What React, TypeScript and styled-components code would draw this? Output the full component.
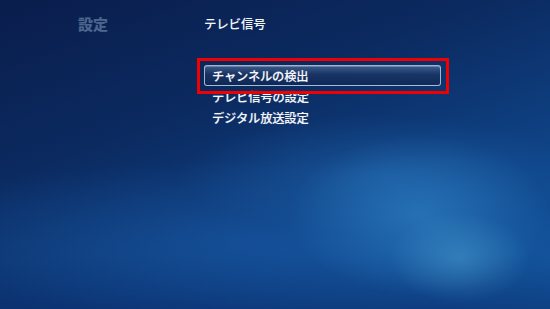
import React from "react";
import styled, { createGlobalStyle } from "styled-components";

const Global = createGlobalStyle`
  html, body { margin: 0; padding: 0; }
  body {
    width: 550px;
    height: 309px;
    overflow: hidden;
    font-family: "Noto Sans CJK JP", "Noto Sans", sans-serif;
  }
`;

const Screen = styled.div`
  width: 550px;
  height: 309px;
  box-sizing: border-box;
  padding: 14px 0 0 78px;
  display: grid;
  grid-template-columns: 126px 1fr;
  grid-template-rows: 20px 1fr;
  row-gap: 31px;
  background:
    radial-gradient(ellipse 70px 45px at 460px 258px, rgba(95, 185, 225, 0.35), rgba(95, 185, 225, 0) 100%),
    radial-gradient(ellipse 130px 80px at 420px 215px, rgba(55, 145, 210, 0.5), rgba(55, 145, 210, 0) 100%),
    radial-gradient(ellipse 200px 60px at 380px 175px, rgba(40, 120, 195, 0.35), rgba(40, 120, 195, 0) 100%),
    radial-gradient(ellipse 380px 80px at 250px 240px, rgba(30, 100, 180, 0.4), rgba(30, 100, 180, 0) 100%),
    linear-gradient(to bottom, rgba(8, 30, 80, 0) 82%, rgba(8, 34, 95, 0.45) 100%),
    linear-gradient(160deg, #0a1d4c 0%, #0b2a60 35%, #0f4488 70%, #145aa3 100%);
`;

const Section = styled.div<{ $dim?: boolean }>`
  font-size: ${(p) => (p.$dim ? "15px" : "12.5px")};
  font-weight: ${(p) => (p.$dim ? 700 : 500)};
  line-height: 20px;
  color: ${(p) => (p.$dim ? "#4d6690" : "#f2f5fa")};
  letter-spacing: ${(p) => (p.$dim ? "0" : "-0.2px")};
  text-shadow: 0 0 1px rgba(255, 255, 255, 0.15);
`;

const Menu = styled.div`
  grid-column: 2;
  display: flex;
  flex-direction: column;
  width: 237px;
`;

const Item = styled.div<{ $focused?: boolean }>`
  position: relative;
  height: 21px;
  box-sizing: border-box;
  padding: 1px 0 0 7px;
  display: flex;
  align-items: center;
  font-size: 12.3px;
  font-weight: 500;
  letter-spacing: -0.2px;
  color: #f4f6fa;
  text-shadow: 0 0 1px rgba(255, 255, 255, 0.4);
  border-radius: 3px;
  border: 1px solid ${(p) => (p.$focused ? "rgba(190, 205, 225, 0.85)" : "transparent")};
  background: ${(p) =>
    p.$focused
      ? "linear-gradient(to bottom, rgba(120,150,190,0.45) 0%, rgba(30,55,100,0.7) 45%, rgba(15,40,85,0.75) 100%)"
      : "transparent"};
  box-shadow: ${(p) => (p.$focused ? "inset 0 1px 0 rgba(255,255,255,0.25)" : "none")};
`;

const Highlight = styled.div`
  position: absolute;
  z-index: 1;
  left: -8px;
  top: -8px;
  right: -9px;
  bottom: -9px;
  border: 3px solid #f00000;
  pointer-events: none;
`;

export default function App() {
  return (
    <>
      <Global />
      <Screen>
        <Section $dim>設定</Section>
        <Section>テレビ信号</Section>
        <Menu>
          <Item $focused>
            チャンネルの検出
            <Highlight />
          </Item>
          <Item>テレビ信号の設定</Item>
          <Item>デジタル放送設定</Item>
        </Menu>
      </Screen>
    </>
  );
}
